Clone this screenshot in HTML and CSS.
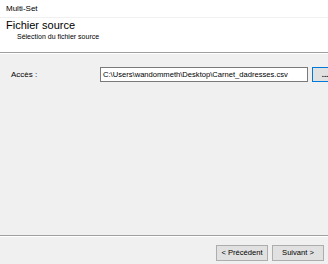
FILE: index.html
```html
<!DOCTYPE html>
<html lang="fr">
<head>
    <meta charset="UTF-8">
    <title>Multi-Set</title>
    <link rel="stylesheet" href="styles.css">
</head>
<body>
    <div class="window">
        <div class="titlebar">Multi-Set</div>

        <div class="header">
            <div class="header-title">Fichier source</div>
            <div class="header-sub">Sélection du fichier source</div>
        </div>

        <div class="content">
            <div class="field">
                <label class="field-label">Accès :</label>
                <input class="field-input" type="text" value="C:\Users\wandommeth\Desktop\Carnet_dadresses.csv">
                <button class="browse">...</button>
            </div>
        </div>

        <div class="footer">
            <button class="btn">&lt; Précédent</button>
            <button class="btn">Suivant &gt;</button>
        </div>
    </div>
</body>
</html>
```

FILE: styles.css
```css
html, body {
    margin: 0;
    height: 100%;
    overflow: hidden;
}

body {
    font-family: 'Liberation Sans', Arial, sans-serif;
    font-size: 8px;
    color: #000;
    background: #f0f0f0;
}

.window {
    display: flex;
    flex-direction: column;
    height: 264px;
    width: 328px;
    overflow: hidden;
}

.titlebar {
    height: 18px;
    line-height: 18px;
    padding-left: 6px;
    background: #fff;
    border-bottom: 1px solid #f0f0f0;
    box-sizing: border-box;
}

.header {
    height: 35px;
    background: #fff;
    border-bottom: 1px solid #a0a0a0;
    box-shadow: 0 1px 0 #fff;
    padding: 1px 0 0 6px;
    box-sizing: border-box;
}

.header-title {
    font-size: 11px;
    line-height: 13px;
}

.header-sub {
    padding-left: 11px;
    font-size: 7px;
    line-height: 10px;
}

.content {
    flex: 1;
    padding-top: 14px;
    border-bottom: 1px solid #a0a0a0;
    box-shadow: 0 1px 0 #fff;
}

.field {
    display: flex;
    align-items: center;
    height: 15px;
}

.field-label {
    width: 89px;
    padding-left: 11px;
    flex-shrink: 0;
}

.field-input {
    width: 208px;
    height: 15px;
    box-sizing: border-box;
    margin: 0;
    padding: 0 2px;
    border: 1px solid #7a7a7a;
    font-family: inherit;
    font-size: 7.6px;
    background: #fff;
    flex-shrink: 0;
}

.browse {
    margin-left: 4px;
    width: 26px;
    height: 15px;
    padding: 0;
    border: 1px solid #0078d7;
    background: #e1e1e1;
    font-family: inherit;
    font-size: 8px;
    font-weight: bold;
    flex-shrink: 0;
}

.footer {
    height: 28px;
    display: flex;
    justify-content: flex-end;
    align-items: center;
    gap: 4px;
    padding: 5px 4px 0 0;
    box-sizing: border-box;
}

.btn {
    width: 52px;
    height: 16px;
    padding: 0;
    border: 1px solid #adadad;
    background: #e1e1e1;
    font-family: inherit;
    font-size: 7.6px;
    color: #000;
}
```
